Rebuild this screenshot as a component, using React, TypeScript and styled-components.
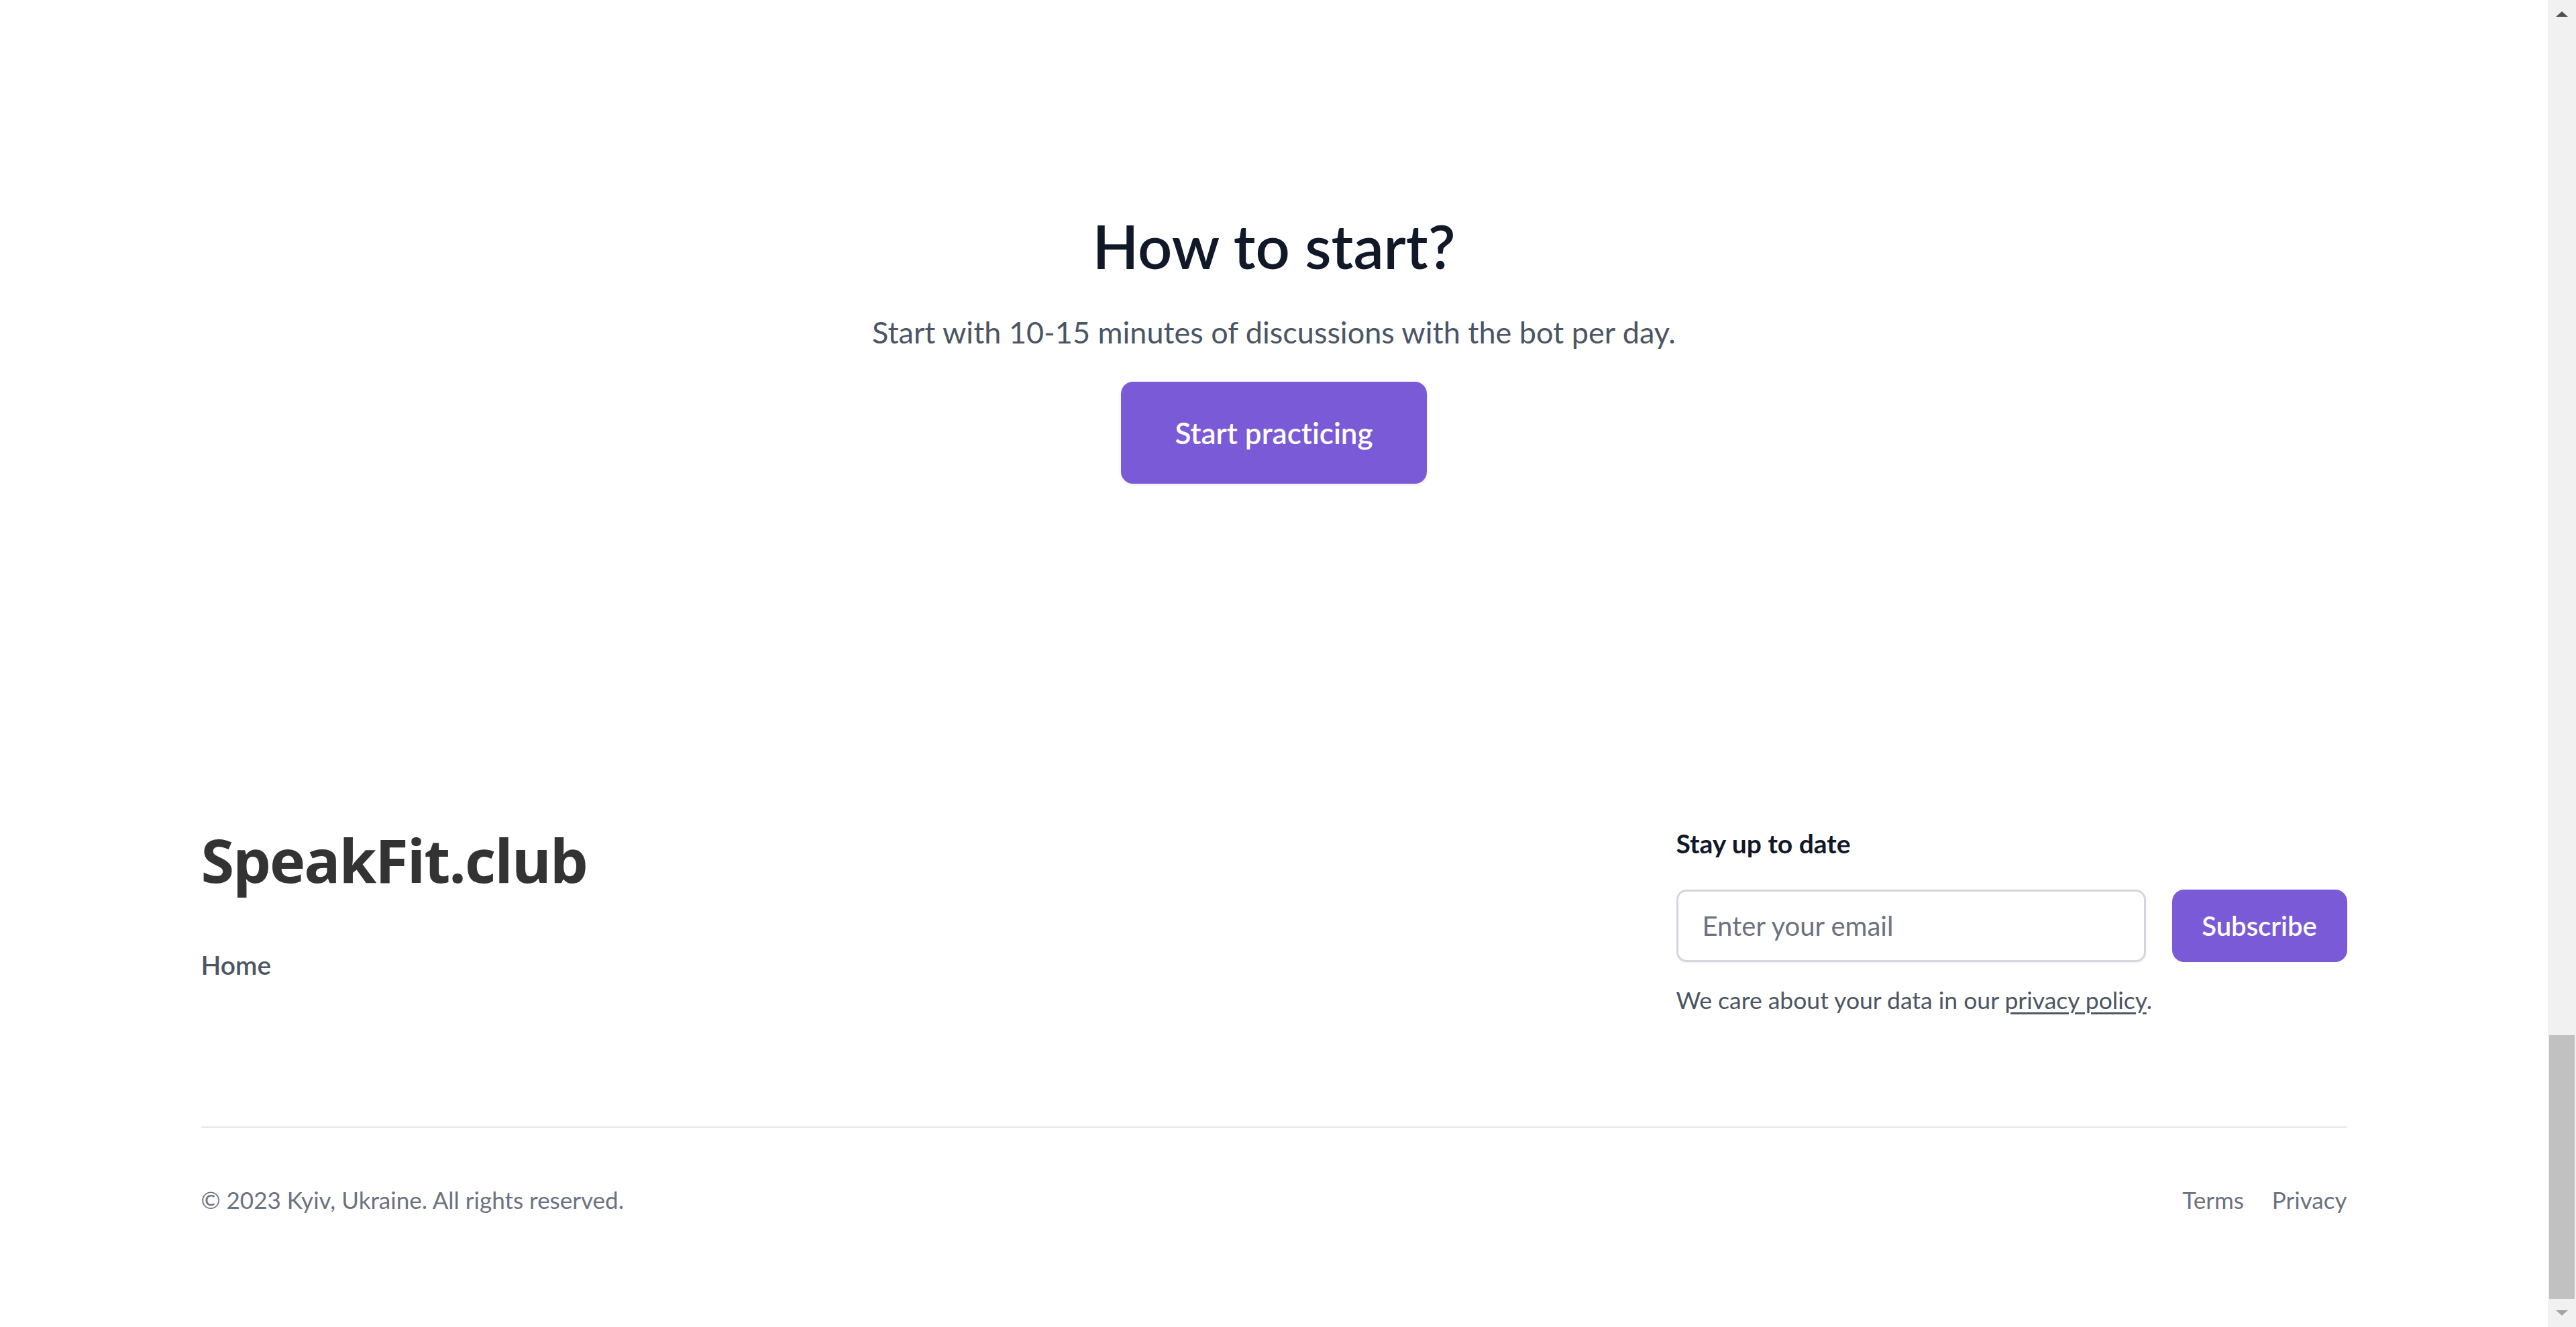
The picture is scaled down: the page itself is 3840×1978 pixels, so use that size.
import styled, { createGlobalStyle } from "styled-components";

const GlobalStyle = createGlobalStyle`
  html, body {
    margin: 0;
    padding: 0;
    height: 100%;
    overflow: hidden;
    background: #ffffff;
  }

  body {
    font-family: "Lato", "Noto Sans", sans-serif;
    font-variant-ligatures: none;
    -webkit-font-smoothing: antialiased;
  }

  * {
    box-sizing: border-box;
  }
`;

const App = () => {
  return (
    <>
      <GlobalStyle />
      <Window>
        <Page>
          <Hero>
            <HeroTitle>How to start?</HeroTitle>
            <HeroText>Start with 10-15 minutes of discussions with the bot per day.</HeroText>
            <PrimaryButton>Start practicing</PrimaryButton>
          </Hero>

          <Footer>
            <FooterTop>
              <BrandColumn>
                <Brand>SpeakFit.club</Brand>
                <NavLink href="#">Home</NavLink>
              </BrandColumn>

              <NewsletterColumn>
                <NewsletterTitle>Stay up to date</NewsletterTitle>
                <SubscribeForm onSubmit={(e) => e.preventDefault()}>
                  <EmailInput type="email" placeholder="Enter your email" />
                  <SubscribeButton type="submit">Subscribe</SubscribeButton>
                </SubscribeForm>
                <Note>
                  We care about your data in our <NoteLink href="#">privacy policy</NoteLink>.
                </Note>
              </NewsletterColumn>
            </FooterTop>

            <FooterBottom>
              <Copyright>© 2023 Kyiv, Ukraine. All rights reserved.</Copyright>
              <LegalLinks>
                <LegalLink href="#">Terms</LegalLink>
                <LegalLink href="#">Privacy</LegalLink>
              </LegalLinks>
            </FooterBottom>
          </Footer>
        </Page>

        <Scrollbar>
          <ScrollArrow>
            <svg width="22" height="12" viewBox="0 0 22 12">
              <polygon points="11,2 20,10 2,10" fill="#505050" />
            </svg>
          </ScrollArrow>
          <ScrollTrack>
            <ScrollThumb />
          </ScrollTrack>
          <ScrollArrow>
            <svg width="22" height="12" viewBox="0 0 22 12">
              <polygon points="2,2 20,2 11,10" fill="#a3a3a3" />
            </svg>
          </ScrollArrow>
        </Scrollbar>
      </Window>
    </>
  );
};

const Window = styled.div`
  display: flex;
  width: 100vw;
  height: 100vh;
`;

const Page = styled.div`
  flex: 1;
  display: flex;
  flex-direction: column;
  min-width: 0;
`;

const Hero = styled.section`
  display: flex;
  flex-direction: column;
  align-items: center;
  padding-top: 322px;
`;

const HeroTitle = styled.h2`
  margin: 0;
  font-size: 90px;
  line-height: 88px;
  font-weight: 600;
  color: #111827;
`;

const HeroText = styled.p`
  margin: 51px 0 0;
  font-size: 45px;
  line-height: 68px;
  color: #4b5563;
`;

const PrimaryButton = styled.button`
  margin-top: 40px;
  height: 152px;
  padding: 0 80px;
  border: none;
  border-radius: 18px;
  background: #7a5ad6;
  color: #ffffff;
  font-family: inherit;
  font-variant-ligatures: none;
  font-size: 44px;
  font-weight: 600;
  box-shadow: 0 2px 5px rgba(0, 0, 0, 0.08);
  cursor: pointer;
`;

const Footer = styled.footer`
  width: 3199px;
  margin: 508px auto 0;
`;

const FooterTop = styled.div`
  display: flex;
  justify-content: space-between;
  align-items: flex-start;
  padding-bottom: 163px;
  border-bottom: 2px solid #e5e7eb;
`;

const BrandColumn = styled.div`
  display: flex;
  flex-direction: column;
  padding-top: 7px;
`;

const Brand = styled.div`
  font-family: "Open Sans", "Noto Sans", sans-serif;
  font-size: 90px;
  line-height: 90px;
  font-weight: 700;
  color: #333333;
  letter-spacing: -2px;
`;

const NavLink = styled.a`
  margin-top: 82px;
  font-size: 39px;
  line-height: 60px;
  font-weight: 600;
  color: #4b5563;
  text-decoration: none;
`;

const NewsletterColumn = styled.div`
  width: 1000px;
  display: flex;
  flex-direction: column;
`;

const NewsletterTitle = styled.h3`
  margin: 0;
  font-size: 39px;
  line-height: 56px;
  font-weight: 700;
  color: #111827;
`;

const SubscribeForm = styled.form`
  display: flex;
  gap: 39px;
  margin: 41px 0 0;
`;

const EmailInput = styled.input`
  width: 700px;
  height: 108px;
  padding: 0 36px;
  border: 3px solid #d4d5de;
  border-radius: 15px;
  font-family: inherit;
  font-size: 40px;
  color: #111827;
  outline: none;
  box-shadow: 0 2px 3px rgba(0, 0, 0, 0.05);

  &::placeholder {
    color: #6b7280;
  }
`;

const SubscribeButton = styled.button`
  flex: 1;
  height: 108px;
  border: none;
  border-radius: 18px;
  background: #7a5ad6;
  color: #ffffff;
  font-family: inherit;
  font-size: 40px;
  font-weight: 600;
  cursor: pointer;
`;

const Note = styled.p`
  margin: 32px 0 0;
  font-size: 35.5px;
  line-height: 50px;
  color: #4b5563;
`;

const NoteLink = styled.a`
  color: #4b5563;
  text-decoration: underline;
  text-underline-offset: 5px;
  text-decoration-thickness: 3px;
`;

const FooterBottom = styled.div`
  display: flex;
  justify-content: space-between;
  align-items: center;
  padding-top: 82px;
`;

const Copyright = styled.p`
  margin: 0;
  font-size: 35px;
  line-height: 50px;
  color: #6b7280;
`;

const LegalLinks = styled.nav`
  display: flex;
  gap: 42px;
`;

const LegalLink = styled.a`
  font-size: 35px;
  line-height: 50px;
  color: #6b7280;
  text-decoration: none;
`;

const Scrollbar = styled.div`
  width: 42px;
  display: flex;
  flex-direction: column;
  background: #f1f1f1;
`;

const ScrollArrow = styled.div`
  height: 42px;
  display: flex;
  align-items: center;
  justify-content: center;
`;

const ScrollTrack = styled.div`
  flex: 1;
  display: flex;
  flex-direction: column;
  justify-content: flex-end;
  padding: 0 2px;
`;

const ScrollThumb = styled.div`
  height: 393px;
  background: #c1c1c1;
`;

export default App;
